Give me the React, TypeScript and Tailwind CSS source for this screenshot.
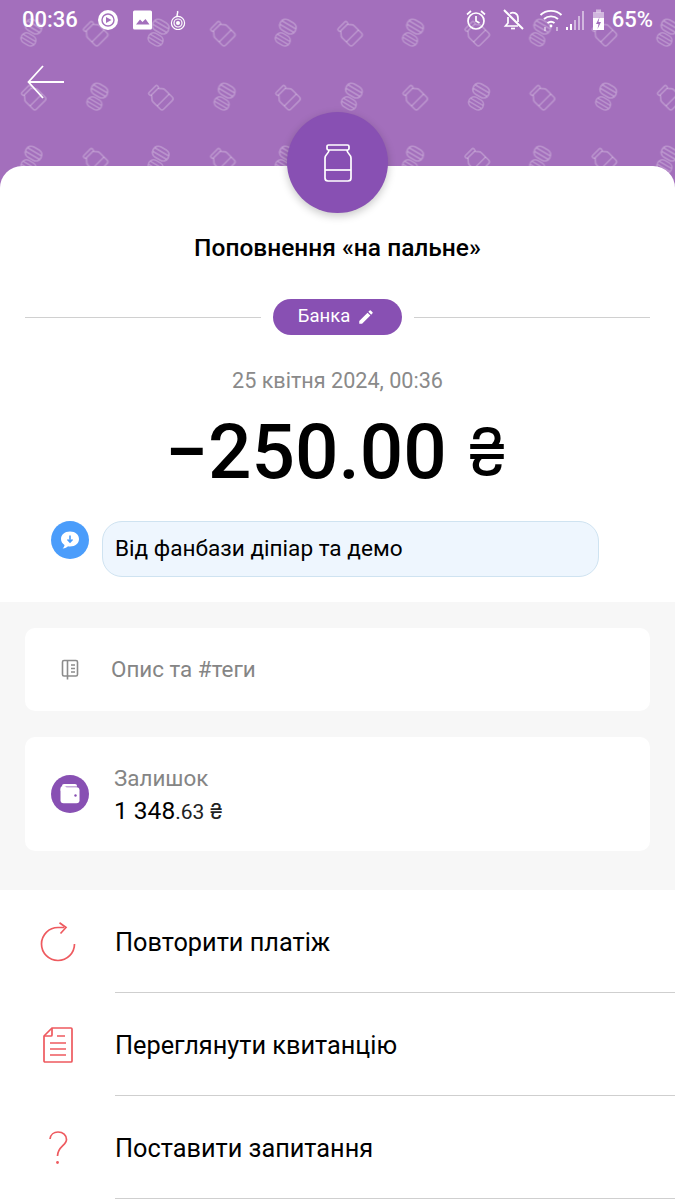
const roboto = { fontFamily: 'Roboto, sans-serif' }
const inter = { fontFamily: 'Inter, sans-serif' }

function JarGlyph() {
  return (
    <>
      <rect x="-7" y="-13" width="14" height="4" rx="1.5" />
      <path d="M-6 -9 C-6 -6 -10 -6 -10 -2 V10 Q-10 13 -7 13 H7 Q10 13 10 10 V-2 C10 -6 6 -6 6 -9" />
      <path d="M-10 5 H10" />
    </>
  )
}

function CoinStack() {
  return (
    <>
      <rect x="-10" y="-7" width="20" height="14" rx="6.5" />
      <path d="M-9 -2.3 H9 M-9 2.3 H9" />
    </>
  )
}

function CoinsGlyph() {
  return (
    <>
      <g transform="translate(3 -7.5) rotate(30)"><CoinStack /></g>
      <g transform="translate(-3 7.5) rotate(30) scale(0.9)"><CoinStack /></g>
    </>
  )
}

function HeaderPattern() {
  return (
    <svg className="absolute inset-0 h-full w-full" aria-hidden="true">
      <defs>
        <pattern id="tile" width="127.2" height="127" patternUnits="userSpaceOnUse">
          <g fill="none" stroke="#ffffff" strokeOpacity="0.24" strokeWidth="2">
            <g transform="translate(31 33) scale(0.85)"><CoinsGlyph /></g>
            <g transform="translate(95 33) rotate(-45) scale(0.85)"><JarGlyph /></g>
            <g transform="translate(33 97) rotate(-45) scale(0.85)"><JarGlyph /></g>
            <g transform="translate(97 97) scale(0.85)"><CoinsGlyph /></g>
          </g>
        </pattern>
      </defs>
      <rect width="100%" height="100%" fill="url(#tile)" />
    </svg>
  )
}

function StatusBar() {
  return (
    <div className="relative flex h-10 items-center justify-between pl-[22px] pr-[22px] text-white">
      <div className="flex items-center">
        <span className="text-[22px] font-medium leading-none">00:36</span>
        <svg className="ml-[19px]" width="22" height="22" viewBox="0 0 22 22">
          <circle cx="11" cy="11" r="10" fill="#fff" />
          <circle cx="11" cy="11" r="6" fill="none" stroke="#a36fbc" strokeWidth="1.4" />
          <path d="M9 8 L14.5 11 L9 14 Z" fill="#a36fbc" />
        </svg>
        <svg className="ml-[14px]" width="20" height="20" viewBox="0 0 20 20">
          <rect width="19" height="19" y="0.5" rx="1.5" fill="#fff" />
          <path d="M3 14.5 L7 9.5 L9.5 12 L12.5 9 L16.5 14.5 Z" fill="#a36fbc" />
        </svg>
        <svg className="ml-[17px]" width="16" height="20" viewBox="0 0 16 20" fill="none" stroke="#fff">
          <circle cx="8" cy="13" r="6.6" strokeWidth="1.2" />
          <circle cx="8" cy="13" r="4" strokeWidth="1.2" />
          <circle cx="8" cy="13" r="2" fill="#fff" stroke="none" />
          <path d="M7.5 7 C6 4.5 8.5 3.5 7.5 1" strokeWidth="1.5" />
        </svg>
      </div>
      <div className="flex items-center">
        <svg width="22" height="22" viewBox="0 0 22 22" fill="none" stroke="#fff" strokeWidth="1.7">
          <circle cx="11" cy="12" r="8" />
          <path d="M11 7 V12 L14.5 14" />
          <path d="M2 5.5 L6 2 M20 5.5 L16 2" />
        </svg>
        <svg className="ml-[15px]" width="22" height="22" viewBox="0 0 22 22" fill="none" stroke="#fff" strokeWidth="1.7">
          <path d="M6 8 V14 L3.5 17 H16 M8 4.5 C11 2.5 16 4 16 9 V13" />
          <path d="M9 19.5 H13" />
          <path d="M2 1 L21 20" strokeWidth="2" />
        </svg>
        <svg className="ml-[15px]" width="24" height="24" viewBox="0 0 24 24" fill="none" stroke="#fff" strokeWidth="1.9">
          <path d="M1.5 7 C7 1.5 17 1.5 22.5 7" />
          <path d="M5 11 C9 7.5 15 7.5 19 11" />
          <path d="M8.5 15 C10.5 13.5 13.5 13.5 15.5 15" />
          <circle cx="12" cy="18" r="1.4" fill="#fff" stroke="none" />
          <path d="M6 23 V19 M18 19 V23" strokeOpacity="0.5" />
        </svg>
        <svg className="ml-[3px]" width="20" height="22" viewBox="0 0 20 22" fill="#fff">
          <rect x="0" y="18" width="2" height="3" />
          <rect x="4" y="15" width="2" height="6" />
          <rect x="8" y="11" width="2" height="10" opacity="0.5" />
          <rect x="12" y="7" width="2" height="14" opacity="0.5" />
          <rect x="16" y="2" width="2" height="19" opacity="0.5" />
        </svg>
        <svg className="ml-[6px]" width="13" height="22" viewBox="0 0 13 22">
          <rect x="4" y="0.5" width="5" height="3" fill="#fff" fillOpacity="0.5" />
          <rect x="1" y="3" width="11" height="6" fill="#fff" fillOpacity="0.5" />
          <rect x="1" y="9" width="11" height="12" fill="#fff" />
          <path d="M7.5 8 L4 15 H6.5 L5.5 20 L9 13 H6.5 Z" fill="#a36fbc" />
        </svg>
        <span className="ml-[7px] text-[22px] font-medium leading-none">65%</span>
      </div>
    </div>
  )
}

function MenuRow({ icon, label }: { icon: React.ReactNode; label: string }) {
  return (
    <div className="flex h-[103px] items-stretch">
      <div className="flex w-[115px] items-center justify-center">{icon}</div>
      <div className="flex flex-1 items-center border-b border-[#cfcfcf] pt-1 text-[25.3px] text-black">{label}</div>
    </div>
  )
}

export default function App() {
  return (
    <div className="relative h-[1200px] w-[675px] overflow-hidden bg-white" style={roboto}>
      <div className="relative h-[190px] bg-[#a36fbc]">
        <HeaderPattern />
        <StatusBar />
        <svg className="absolute left-[27px] top-[65px]" width="38" height="34" viewBox="0 0 38 34" fill="none" stroke="#fff" strokeWidth="1.8">
          <path d="M1.5 17 H37 M16 1 L1.5 17 L16 33" />
        </svg>
      </div>

      <div className="relative -mt-6 rounded-t-[22px] bg-white">
        <div className="absolute left-[287px] top-[-54px] flex h-[101px] w-[101px] items-center justify-center rounded-full bg-[#8850b3] shadow-[0_3px_8px_rgba(0,0,0,0.22)]">
          <svg width="30" height="40" viewBox="0 0 30 40" fill="none" stroke="#fff" strokeWidth="1.7">
            <rect x="4" y="2" width="22" height="5" rx="1.5" />
            <path d="M6 7 C6 11 2 11 2 15 V35 Q2 38 5 38 H25 Q28 38 28 35 V15 C28 11 24 11 24 7" />
            <path d="M2 27 H28" />
          </svg>
        </div>

        <div className="pt-[68px] text-center text-[24.5px] font-medium leading-7 text-black">Поповнення «на пальне»</div>

        <div className="mt-[37px] flex items-center px-[25px]">
          <div className="h-px flex-1 bg-[#d0d0d0]" />
          <div className="mx-[12px] flex h-9 w-[129px] items-center justify-center gap-[7px] rounded-full bg-[#8850b3] pr-[2px] text-[18.5px] text-white">
            Банка
            <svg width="18" height="18" viewBox="0 0 24 24" fill="#fff">
              <path d="M3 17.25V21h3.75L17.81 9.94l-3.75-3.75L3 17.25zM20.71 7.04a1 1 0 0 0 0-1.41l-2.34-2.34a1 1 0 0 0-1.41 0l-1.83 1.83 3.75 3.75 1.83-1.83z" />
            </svg>
          </div>
          <div className="h-px flex-1 bg-[#d0d0d0]" />
        </div>

        <div className="mt-[32px] text-center text-[21.6px] leading-7 text-[#8a8a8a]">25 квітня 2024, 00:36</div>

        <div className="mt-[15px] flex items-center pl-[165px] text-[76.5px] font-medium leading-[84px] text-black">
          <span>−250.00</span>
          <span className="ml-[20px] text-[64px] font-normal" style={inter}>₴</span>
        </div>

        <div className="mt-[27px] flex items-start pl-[51px]">
          <div className="flex h-[38px] w-[38px] items-center justify-center rounded-full bg-[#4b9dfb]">
            <svg width="24" height="24" viewBox="0 0 24 24">
              <path d="M12 3.5 C6.5 3.5 3 6.8 3 11 C3 13.6 4.4 15.6 6.5 16.9 C6.5 18.2 5.6 19.6 4.6 20.4 C7 20.4 9 19.3 10 18.3 C10.6 18.4 11.3 18.5 12 18.5 C17.5 18.5 21 15.2 21 11 C21 6.8 17.5 3.5 12 3.5 Z" fill="#fff" />
              <path d="M12 7.5 V14 M9.5 11.5 L12 14 L14.5 11.5" fill="none" stroke="#4b9dfb" strokeWidth="1.6" />
            </svg>
          </div>
          <div className="ml-[13px] flex h-[56px] w-[497px] items-center rounded-[20px] border border-[#cfe3f1] bg-[#eef6fe] pl-3 text-[22.6px] text-black">
            Від фанбази діпіар та демо
          </div>
        </div>

        <div className="mt-[25px] flex h-[288px] flex-col gap-[26px] bg-[#f7f7f7] px-[25px] pt-[26px]">
          <div className="flex h-[83px] items-center rounded-[10px] bg-white">
            <svg className="ml-[36px]" width="18" height="22" viewBox="0 0 18 22" fill="none" stroke="#8c8c8c" strokeWidth="1.6">
              <path d="M6.5 17 H3 Q1.5 17 1.5 15.5 V3 Q1.5 1.5 3 1.5 H15 Q16.5 1.5 16.5 3 V15.5 Q16.5 17 15 17 H6.5 M6.5 1.5 V20.5" />
              <path d="M10 6 H14 M10 9.5 H14 M10 13 H14" />
            </svg>
            <span className="ml-[32px] text-[22.4px] text-[#858585]">Опис та #теги</span>
          </div>
          <div className="flex h-[114px] items-center rounded-[10px] bg-white">
            <div className="ml-[26px] flex h-[38px] w-[38px] items-center justify-center rounded-full bg-[#8850b3]">
              <svg width="22" height="22" viewBox="0 0 22 22">
                <path d="M5 1 H16 Q18 1 18 3 V3.4 H3 V3 Q3 1 5 1 Z" fill="#fff" />
                <rect x="1.5" y="4.2" width="19" height="16" rx="3" fill="#fff" />
                <rect x="1.5" y="3" width="6" height="6" rx="2.5" fill="#fff" />
                <circle cx="16.5" cy="12.5" r="1.2" fill="#8850b3" />
              </svg>
            </div>
            <div className="ml-[25px] flex flex-col pt-[3px]">
              <span className="text-[22.4px] leading-[28px] text-[#858585]">Залишок</span>
              <span className="mt-[4px] text-[24.5px] leading-[30px] text-black">
                1 348<span className="text-[21px] text-[#222]">.63 <span className="text-[21px] font-normal" style={inter}>₴</span></span>
              </span>
            </div>
          </div>
        </div>

        <MenuRow
          label="Повторити платіж"
          icon={
            <svg width="36" height="40" viewBox="0 0 36 40" fill="none" stroke="#ee5a5f" strokeWidth="1.7">
              <path d="M34.5 22 A16.5 16.5 0 1 1 18 5.5 H24" />
              <path d="M19.5 0.8 L26 5.5 L20.5 11.5" />
            </svg>
          }
        />
        <MenuRow
          label="Переглянути квитанцію"
          icon={
            <svg width="30" height="36" viewBox="0 0 30 36" fill="none" stroke="#ee5a5f" strokeWidth="1.7">
              <path d="M9 1 H28 Q29 1 29 2 V34 Q29 35 28 35 H2 Q1 35 1 34 V9 Z" />
              <path d="M1 9 H8 Q9 9 9 8 V1" />
              <path d="M14 9 H22 M7 16 H23 M7 22 H23 M7 28 H23" />
            </svg>
          }
        />
        <MenuRow
          label="Поставити запитання"
          icon={
            <svg width="20" height="34" viewBox="0 0 20 34" fill="none" stroke="#ee5a5f" strokeWidth="1.7">
              <path d="M2 8 C2.5 3.5 6 1 10 1 C15 1 18.5 4 18.5 8.5 C18.5 14.5 9.5 15.5 9.5 25" />
              <circle cx="9.5" cy="31.5" r="1.4" fill="#ee5a5f" stroke="none" />
            </svg>
          }
        />
      </div>
    </div>
  )
}
